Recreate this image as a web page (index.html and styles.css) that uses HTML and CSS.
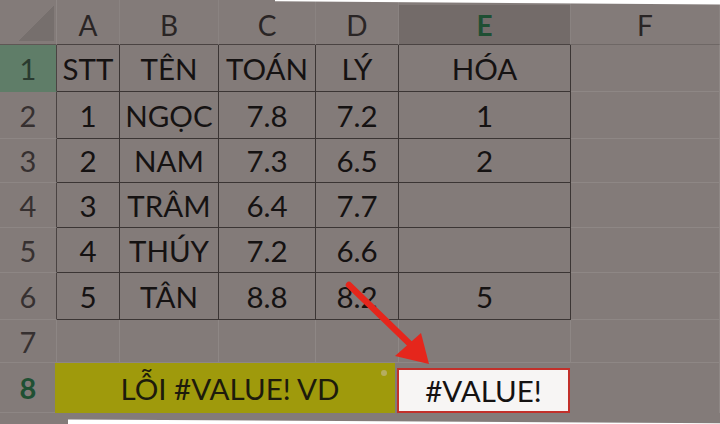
FILE: index.html
```html
<!DOCTYPE html>
<html>
<head>
<meta charset="utf-8">
<link rel="stylesheet" href="styles.css">
</head>
<body>
<div class="page">
  <div class="sheet">
    <div class="corner"><div class="tri"></div></div>
    <div class="ch">A</div>
    <div class="ch">B</div>
    <div class="ch">C</div>
    <div class="ch">D</div>
    <div class="ch ch-sel"><span>E</span></div>
    <div class="ch ch-f">F</div>

    <div class="rh rh-sel rh-t">1</div>
    <div class="c t">STT</div><div class="c t">TÊN</div><div class="c t">TOÁN</div><div class="c t">LÝ</div><div class="c t">HÓA</div><div class="c"></div>

    <div class="rh rh-t">2</div>
    <div class="c t">1</div><div class="c t">NGỌC</div><div class="c t">7.8</div><div class="c t">7.2</div><div class="c t">1</div><div class="c"></div>

    <div class="rh rh-t">3</div>
    <div class="c t">2</div><div class="c t">NAM</div><div class="c t">7.3</div><div class="c t">6.5</div><div class="c t">2</div><div class="c"></div>

    <div class="rh rh-t">4</div>
    <div class="c t">3</div><div class="c t">TRÂM</div><div class="c t">6.4</div><div class="c t">7.7</div><div class="c t"></div><div class="c"></div>

    <div class="rh rh-t">5</div>
    <div class="c t">4</div><div class="c t">THÚY</div><div class="c t">7.2</div><div class="c t">6.6</div><div class="c t"></div><div class="c"></div>

    <div class="rh rh-t">6</div>
    <div class="c t">5</div><div class="c t">TÂN</div><div class="c t">8.8</div><div class="c t">8.2</div><div class="c t">5</div><div class="c"></div>

    <div class="rh">7</div>
    <div class="c"></div><div class="c"></div><div class="c"></div><div class="c"></div><div class="c"></div><div class="c"></div>

    <div class="rh rh-8">8</div>
    <div class="merged">LỖI #VALUE! VD<span class="dot"></span></div>
    <div class="errcell"><div class="errbox">#VALUE!</div></div>
    <div class="c c-last"></div>
  </div>

  <svg class="overlay" width="720" height="424" viewBox="0 0 720 424">
    <polygon points="275,0 720,0 720,4.5 275,1.2" fill="#ffffff"/>
    <polygon points="68,419.5 720,423.3 720,424 68,424" fill="#ffffff"/>
    <line x1="349" y1="285" x2="412" y2="346" stroke="#e5261c" stroke-width="6.5" stroke-linecap="round"/>
    <polygon points="429,364 395,356 421,333" fill="#e5261c"/>
  </svg>
</div>
</body>
</html>
```

FILE: styles.css
```css
* { box-sizing: border-box; }

html, body {
  margin: 0;
  padding: 0;
  background: #837b79;
}

.page {
  position: relative;
  width: 720px;
  height: 424px;
  overflow: hidden;
  background: #837b79;
  font-family: Lato, "Open Sans", "Liberation Sans", sans-serif;
  color: #151212;
}

.sheet {
  display: grid;
  grid-template-columns: 57px 63px 99px 97px 83px 172px 149px;
  grid-template-rows: 45px 47px 47px 44px 45px 45px 47px 43px 50px;
}

.corner {
  position: relative;
  border-bottom: 1px solid #5e5755;
  border-right: 1px solid #8e8785;
}

.tri {
  width: 36px;
  height: 36px;
  margin: 5px 0 0 18px;
  background: linear-gradient(to bottom right, transparent 50%, #766f6d 50%);
}

.ch {
  display: flex;
  align-items: center;
  justify-content: center;
  padding-top: 6px;
  font-size: 28px;
  color: #2a2525;
  border-right: 1px solid #8a8381;
  border-bottom: 1px solid #4a4342;
}

.ch-sel {
  align-items: stretch;
  padding: 5px 0 0 0;
}

.ch-sel span {
  flex: 1;
  display: flex;
  align-items: center;
  justify-content: center;
  padding-top: 1px;
  background: #736b69;
  color: #1f4f33;
  font-weight: 700;
}

.ch-f {
  border-bottom-color: #6e6765;
}

.rh {
  display: flex;
  align-items: center;
  justify-content: center;
  font-size: 29px;
  color: #363030;
  border-bottom: 1px solid #8d8684;
  border-right: 1px solid #8d8684;
}

.rh-t {
  border-right-color: #4a4342;
}

.rh-sel {
  background: #5f7d68;
  color: #2a3a2f;
  border-bottom-color: #5f7d68;
}

.rh-8 {
  color: #1f5033;
  font-weight: 700;
}

.c {
  display: flex;
  align-items: center;
  justify-content: center;
  font-size: 29.5px;
  border-right: 1px solid #8e8785;
  border-bottom: 1px solid #8e8785;
}

.c.t {
  border-right: 1px solid #3b3534;
  border-bottom: 1px solid #3b3534;
}

.merged {
  grid-column: span 4;
  position: relative;
  display: flex;
  align-items: center;
  justify-content: center;
  margin: 0 4px 0 -2px;
  padding-left: 10px;
  font-size: 29.5px;
  background: #9f9a0c;
  color: #1d1b0c;
}

.dot {
  position: absolute;
  right: 8px;
  top: 7px;
  width: 6px;
  height: 6px;
  border-radius: 50%;
  background: #b5ad60;
}

.errcell {
  display: flex;
  padding: 5px 1px 0 0;
  margin-left: -2px;
}

.errbox {
  flex: 1;
  display: flex;
  align-items: center;
  justify-content: center;
  background: #f7f5f4;
  border: 2px solid #c2302a;
  font-size: 29.5px;
  color: #151212;
}

.c-last {
  border-bottom: none;
}

.overlay {
  position: absolute;
  left: 0;
  top: 0;
  pointer-events: none;
}
```
